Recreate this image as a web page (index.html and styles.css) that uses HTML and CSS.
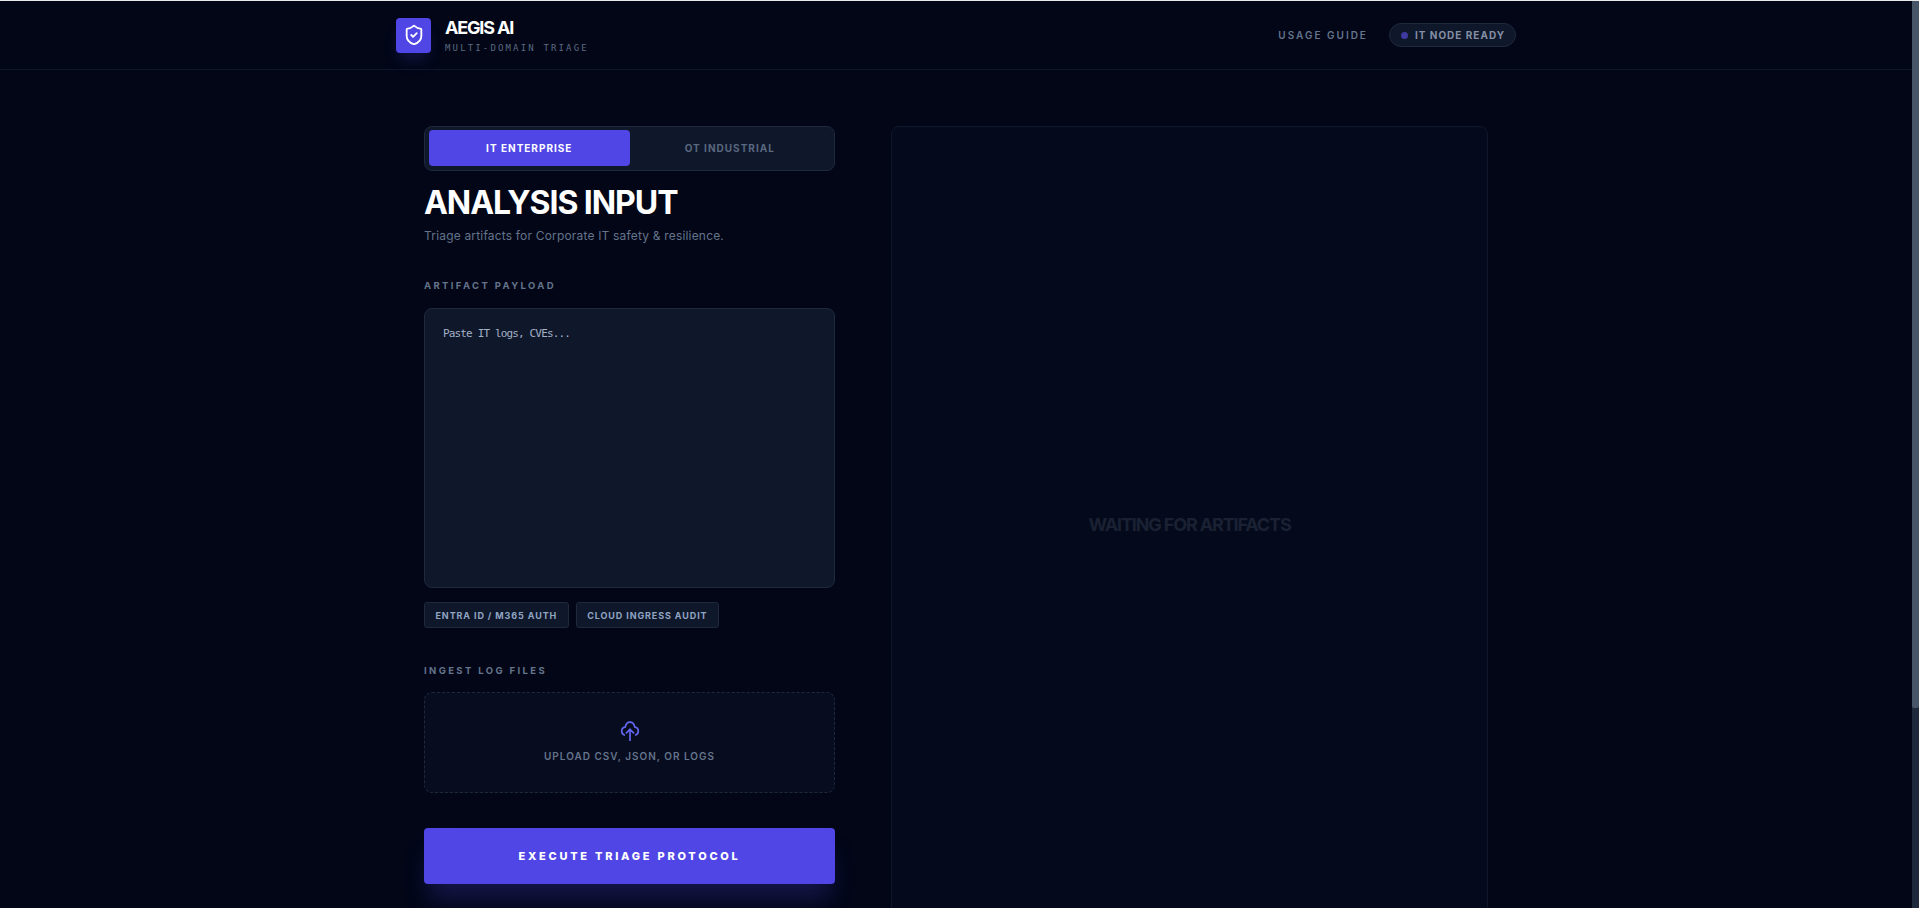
FILE: index.html
```html
<!DOCTYPE html>
<html>
<head>
    <title>Aegis AI</title>
    <link rel="stylesheet" href="styles.css">
</head>
<body>
    <div class="page">
        <header class="topbar">
            <div class="topbar-inner">
                <div class="brand">
                    <div class="brand-logo">
                        <svg width="22" height="22" viewBox="0 0 24 24" fill="none" stroke="#fff" stroke-width="2" stroke-linecap="round" stroke-linejoin="round">
                            <path d="M20 13c0 5-3.5 7.5-7.66 8.95a1 1 0 0 1-.67-.01C7.5 20.5 4 18 4 13V6a1 1 0 0 1 1-1c2 0 4.5-1.2 6.24-2.72a1.17 1.17 0 0 1 1.52 0C14.51 3.81 17 5 19 5a1 1 0 0 1 1 1z"/>
                            <path d="m9 12 2 2 4-4"/>
                        </svg>
                    </div>
                    <div>
                        <div class="brand-name">AEGIS AI</div>
                        <div class="brand-sub">MULTI-DOMAIN TRIAGE</div>
                    </div>
                </div>
                <div class="topbar-right">
                    <span class="guide-link">USAGE GUIDE</span>
                    <span class="status-pill"><span class="status-dot"></span>IT NODE READY</span>
                </div>
            </div>
        </header>

        <main class="layout">
            <section class="input-col">
                <div class="mode-toggle">
                    <button class="mode-btn active">IT ENTERPRISE</button>
                    <button class="mode-btn">OT INDUSTRIAL</button>
                </div>

                <h1 class="page-title">ANALYSIS INPUT</h1>
                <p class="page-sub">Triage artifacts for Corporate IT safety &amp; resilience.</p>

                <label class="field-label payload-label">ARTIFACT PAYLOAD</label>
                <textarea class="payload" placeholder="Paste IT logs, CVEs..."></textarea>

                <div class="chips">
                    <button class="chip">ENTRA ID / M365 AUTH</button>
                    <button class="chip">CLOUD INGRESS AUDIT</button>
                </div>

                <label class="field-label ingest-label">INGEST LOG FILES</label>
                <div class="dropzone">
                    <svg width="20" height="20" viewBox="0 0 20 20" fill="none" stroke="#6366f1" stroke-width="1.7" stroke-linecap="round" stroke-linejoin="round">
                        <path d="M4.3 14C2.5 13.3 1.7 11.8 1.7 10.2C1.7 8 3.4 6.4 5.2 6.2C5.8 3.2 7.5 1.2 10 1.2C12.5 1.2 14.2 3.2 14.8 6.2C16.6 6.4 18.3 8 18.3 10.2C18.3 11.8 17.5 13.3 15.7 14"/>
                        <path d="M10 19.4V8.3"/>
                        <path d="M6.4 11.8L10 8.3L13.6 11.8"/>
                    </svg>
                    <span class="dropzone-text">UPLOAD CSV, JSON, OR LOGS</span>
                </div>

                <button class="execute-btn">EXECUTE TRIAGE PROTOCOL</button>
            </section>

            <section class="output-panel">
                <span class="waiting">WAITING FOR ARTIFACTS</span>
            </section>
        </main>
    </div>

    <div class="scrollbar"><div class="scrollbar-thumb"></div></div>
</body>
</html>
```

FILE: styles.css
```css
* {
    box-sizing: border-box;
}
html {
    height: 100%;
    padding-top: 1px;
    background-color: #e8e8e8;
    overflow: hidden;
}
body {
    height: 100%;
    margin: 0;
    display: flex;
    background-color: #020617;
    color: #fff;
    font-family: Inter, "Liberation Sans", sans-serif;
}
button {
    font-family: inherit;
    border: none;
    cursor: pointer;
}
.page {
    flex: 1;
    min-width: 0;
    overflow: hidden;
}
.scrollbar {
    width: 7px;
    background-color: #1e293b;
}
.scrollbar-thumb {
    height: 707px;
    background-color: #475569;
    border-radius: 0 0 2px 2px;
}

.topbar {
    border-bottom: 1px solid #0f172a;
}
.topbar-inner {
    max-width: 1120px;
    height: 68px;
    margin: 0 auto;
    display: flex;
    align-items: center;
    justify-content: space-between;
}
.brand {
    display: flex;
    align-items: center;
    gap: 14px;
}
.brand-logo {
    width: 35px;
    height: 35px;
    border-radius: 4px;
    background-color: #4f46e5;
    box-shadow: 0 10px 15px -3px rgba(79, 70, 229, 0.2);
    display: flex;
    align-items: center;
    justify-content: center;
}
.brand-name {
    font-size: 18px;
    font-weight: 700;
    line-height: 22px;
    letter-spacing: -0.065em;
}
.brand-sub {
    margin-top: 3px;
    font-family: "DejaVu Sans Mono", monospace;
    font-size: 9px;
    line-height: 12px;
    letter-spacing: 2.15px;
    color: #5b6a80;
}
.topbar-right {
    display: flex;
    align-items: center;
    gap: 21px;
}
.guide-link {
    font-size: 10px;
    font-weight: 600;
    letter-spacing: 0.2em;
    color: #64748b;
}
.status-pill {
    height: 24px;
    padding: 0 10px 0 11px;
    display: flex;
    align-items: center;
    gap: 7px;
    font-size: 10px;
    font-weight: 700;
    letter-spacing: 0.1em;
    color: #848fa6;
    background-color: #0f172a;
    border: 1px solid #1e293b;
    border-radius: 12px;
}
.status-dot {
    width: 7px;
    height: 7px;
    border-radius: 50%;
    background-color: #3f3aa0;
}

.layout {
    max-width: 1120px;
    margin: 0 auto;
    padding: 56px 28px 40px;
    display: grid;
    grid-template-columns: 411px 1fr;
    gap: 56px;
}

.mode-toggle {
    display: flex;
    padding: 3px 4px 4px;
    background-color: #0f172a;
    border: 1px solid #1e293b;
    border-radius: 8px;
}
.mode-btn {
    flex: 1;
    height: 36px;
    font-size: 10px;
    font-weight: 700;
    letter-spacing: 0.1em;
    color: #5a6880;
    background: none;
    border-radius: 4px;
}
.mode-btn.active {
    color: #fff;
    background-color: #4f46e5;
}
.page-title {
    margin: 12px 0 0;
    font-size: 32px;
    font-weight: 700;
    line-height: 40px;
    letter-spacing: -0.033em;
}
.page-sub {
    margin: 3px 0 0;
    font-size: 12px;
    line-height: 20px;
    letter-spacing: 0.18px;
    color: #64748b;
}
.field-label {
    display: block;
    font-size: 9.5px;
    font-weight: 700;
    line-height: 14px;
    letter-spacing: 0.25em;
    color: #64748b;
}
.payload-label {
    margin-top: 33px;
}
.payload {
    display: block;
    width: 100%;
    height: 280px;
    margin-top: 15px;
    padding: 17px 18px;
    font-family: "DejaVu Sans Mono", monospace;
    font-size: 11px;
    line-height: 16px;
    letter-spacing: -0.85px;
    color: #94a3b8;
    background-color: #0f172a;
    border: 1px solid #1e293b;
    border-radius: 8px;
    outline: none;
    resize: none;
}
.payload::placeholder {
    color: #a3b1c6;
}
.chips {
    display: flex;
    gap: 7px;
    margin-top: 14px;
}
.chip {
    height: 26px;
    padding: 0 10.5px;
    font-size: 9px;
    font-weight: 700;
    letter-spacing: 0.1em;
    color: #8fa5c2;
    background-color: #0f172a;
    border: 1px solid #1e293b;
    border-radius: 3px;
}
.ingest-label {
    margin-top: 36px;
}
.dropzone {
    height: 101px;
    margin-top: 14px;
    padding-top: 28px;
    display: flex;
    flex-direction: column;
    align-items: center;
    gap: 9px;
    background-color: #070c1f;
    border: 1px dashed #1e293b;
    border-radius: 8px;
}
.dropzone-text {
    font-size: 10px;
    font-weight: 600;
    line-height: 12px;
    letter-spacing: 0.1em;
    color: #64748b;
}
.execute-btn {
    display: block;
    width: 100%;
    height: 56px;
    margin-top: 35px;
    font-size: 11px;
    font-weight: 800;
    letter-spacing: 0.25em;
    color: #fff;
    background-color: #4f46e5;
    border-radius: 4px;
    box-shadow: 0 20px 25px -5px rgba(79, 70, 229, 0.25);
}

.output-panel {
    height: 796px;
    display: flex;
    align-items: center;
    justify-content: center;
    background-color: #040a1b;
    border: 1px solid #0f172a;
    border-radius: 8px;
}
.waiting {
    font-size: 18px;
    font-weight: 700;
    letter-spacing: -1.14px;
    color: #1a2133;
}
```
